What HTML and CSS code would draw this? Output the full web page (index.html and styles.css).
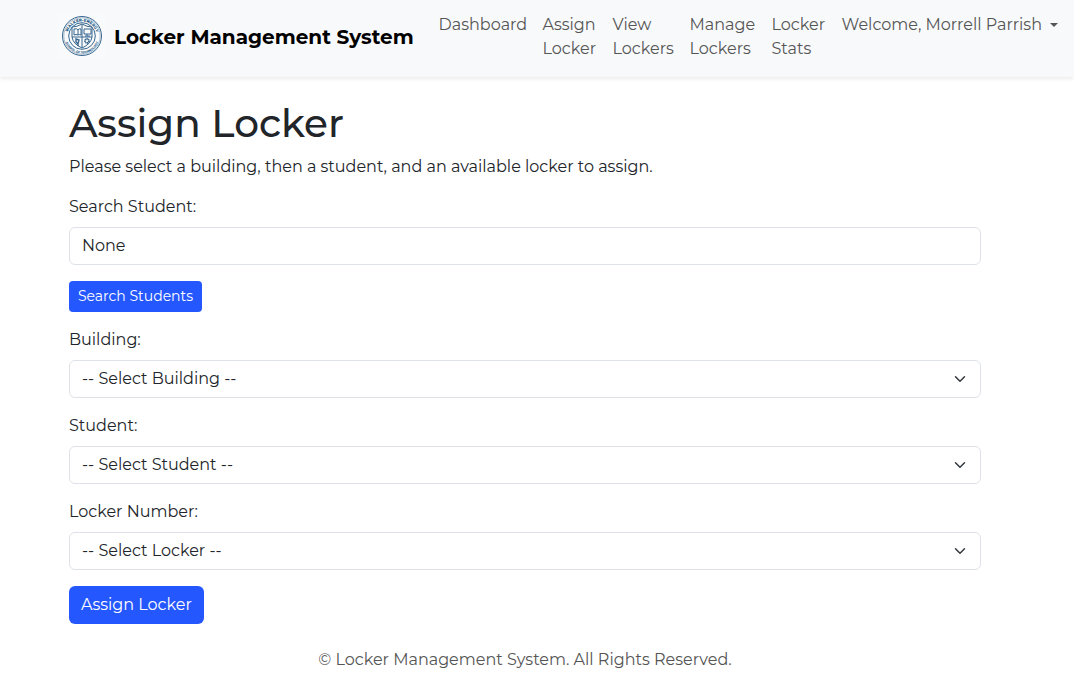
FILE: index.html
```html
<!DOCTYPE html>
<html lang="en">
<head>
<meta charset="utf-8">
<meta name="viewport" content="width=device-width, initial-scale=1">
<title>Assign Locker - Locker Management System</title>
<link rel="stylesheet" href="styles.css">
</head>
<body>
<header class="navbar">
  <a class="brand" href="#">
    <svg class="brand-logo" viewBox="0 0 48 48" role="img" aria-label="School seal">
      <defs>
        <path id="arc-top" d="M9.5 24a14.5 14.5 0 0 1 29 0"/>
        <path id="arc-bottom" d="M6.5 24a17.5 17.5 0 0 0 35 0"/>
      </defs>
      <rect class="seal-tile" width="48" height="48"/>
      <g class="seal-lines">
        <circle cx="24" cy="24" r="19.5"/>
        <circle cx="24" cy="24" r="18.2" stroke-width=".4"/>
        <circle cx="24" cy="24" r="13.3"/>
        <path d="M14 15q5 0 10-3 5 3 10 3v10q-1 7-10 11-9-4-10-11zM24 12v24M14 25h20"/>
        <path d="M16 17q3-1 4 1 1-2 3-1v6q-2-1-3 0-2-1-4 0zM20 18v5M26 17h7v5h-7zM29 22v2M27 24h5"/>
        <path d="M18 27l3 1-1 4-2-2zM20 32v2" stroke-width="1.4"/>
        <circle cx="29" cy="29" r="2" stroke-width="1.8" stroke-dasharray="1.2 .4"/>
      </g>
      <text class="seal-text"><textPath href="#arc-top" startOffset="50%">WALKER-ENERGY</textPath></text>
      <text class="seal-text seal-text-small"><textPath href="#arc-bottom" startOffset="50%">SCHOOL OF TECHNOLOGY</textPath></text>
    </svg>
    <span class="brand-name">Locker Management System</span>
  </a>
  <nav class="nav">
    <a class="nav-link" href="#">Dashboard</a>
    <a class="nav-link" href="#">Assign Locker</a>
    <a class="nav-link" href="#">View Lockers</a>
    <a class="nav-link" href="#">Manage Lockers</a>
    <a class="nav-link" href="#">Locker Stats</a>
    <button class="nav-link nav-user" type="button" aria-haspopup="true">Welcome, Morrell Parrish<span class="caret"></span></button>
  </nav>
</header>
<main class="container">
  <h1 class="title">Assign Locker</h1>
  <p class="lead">Please select a building, then a student, and an available locker to assign.</p>
  <form class="form">
    <div class="field">
      <label class="label" for="search">Search Student:</label>
      <input class="control" id="search" type="text" value="None">
    </div>
    <button class="btn btn-small" type="button">Search Students</button>
    <div class="field">
      <label class="label" for="building">Building:</label>
      <select class="control select" id="building"><option>-- Select Building --</option></select>
    </div>
    <div class="field">
      <label class="label" for="student">Student:</label>
      <select class="control select" id="student"><option>-- Select Student --</option></select>
    </div>
    <div class="field">
      <label class="label" for="locker">Locker Number:</label>
      <select class="control select" id="locker"><option>-- Select Locker --</option></select>
    </div>
    <button class="btn" type="submit">Assign Locker</button>
  </form>
  <footer class="footer">© Locker Management System. All Rights Reserved.</footer>
</main>
</body>
</html>
```

FILE: styles.css
```css
* { box-sizing: border-box; }

body {
  margin: 0;
  font-family: Montserrat, Inter, sans-serif;
  font-size: 16px;
  line-height: 24px;
  color: #212529;
  background: #fff;
}

.navbar {
  display: flex;
  align-items: flex-start;
  justify-content: space-between;
  padding: 12px 16px 16px 58px;
  background: #f8f9fb;
  box-shadow: 0 2px 4px rgba(0, 0, 0, 0.08);
}

.brand {
  display: flex;
  align-items: center;
  gap: 8px;
  color: #000;
  text-decoration: none;
}

.brand-logo { width: 48px; height: 48px; }
.seal-tile { fill: #f9fafb; }
.seal-lines { fill: none; stroke: #38678f; stroke-width: 1; }
.seal-text {
  fill: #2c5f8a;
  font-size: 4px;
  font-weight: 800;
  text-anchor: middle;
}
.seal-text-small { font-size: 3px; }

.brand-name {
  padding-top: 2px;
  font-size: 20px;
  font-weight: 700;
  white-space: nowrap;
}

.nav {
  display: grid;
  grid-template-columns: 88px 54px 61px 66px 54px auto;
  gap: 16px;
  padding-top: 1px;
}

.nav-link {
  color: #555;
  text-decoration: none;
}

.nav-user {
  display: flex;
  align-items: center;
  align-self: start;
  gap: 8px;
  padding: 0;
  border: 0;
  background: none;
  font: inherit;
  white-space: nowrap;
}

.caret {
  border: 4px solid transparent;
  border-top-color: currentColor;
  border-bottom: 0;
}

.container { padding: 22px 93px 12px 69px; }

.title {
  margin: 0 0 8px;
  font-size: 39px;
  font-weight: 500;
  line-height: 48px;
}

.lead { margin: 0 0 16px; }

.form {
  display: flex;
  flex-direction: column;
  align-items: flex-start;
  gap: 16px;
}

.field {
  display: flex;
  flex-direction: column;
  gap: 8px;
  width: 100%;
}

.control {
  width: 100%;
  height: 38px;
  padding: 5px 12px 7px;
  border: 1px solid #dee2e6;
  border-radius: 6px;
  background: #fff;
  color: #212529;
  font: inherit;
}

.select {
  appearance: none;
  padding: 6px 12px;
  background: #fff url("data:image/svg+xml,%3Csvg xmlns='http://www.w3.org/2000/svg' viewBox='0 0 16 16'%3E%3Cpath fill='none' stroke='%23343a40' stroke-linecap='round' stroke-linejoin='round' stroke-width='2' d='m2 5 6 6 6-6'/%3E%3C/svg%3E") no-repeat right 14px center / 12px 12px;
}

.btn {
  padding: 7px 12px;
  border: 0;
  border-radius: 6px;
  background: #2557ff;
  color: #fff;
  font: inherit;
}

.btn-small {
  padding: 5px 9px;
  border-radius: 4px;
  font-size: 14px;
  line-height: 21px;
}

.footer {
  margin-top: 24px;
  color: #555;
  text-align: center;
}
```
